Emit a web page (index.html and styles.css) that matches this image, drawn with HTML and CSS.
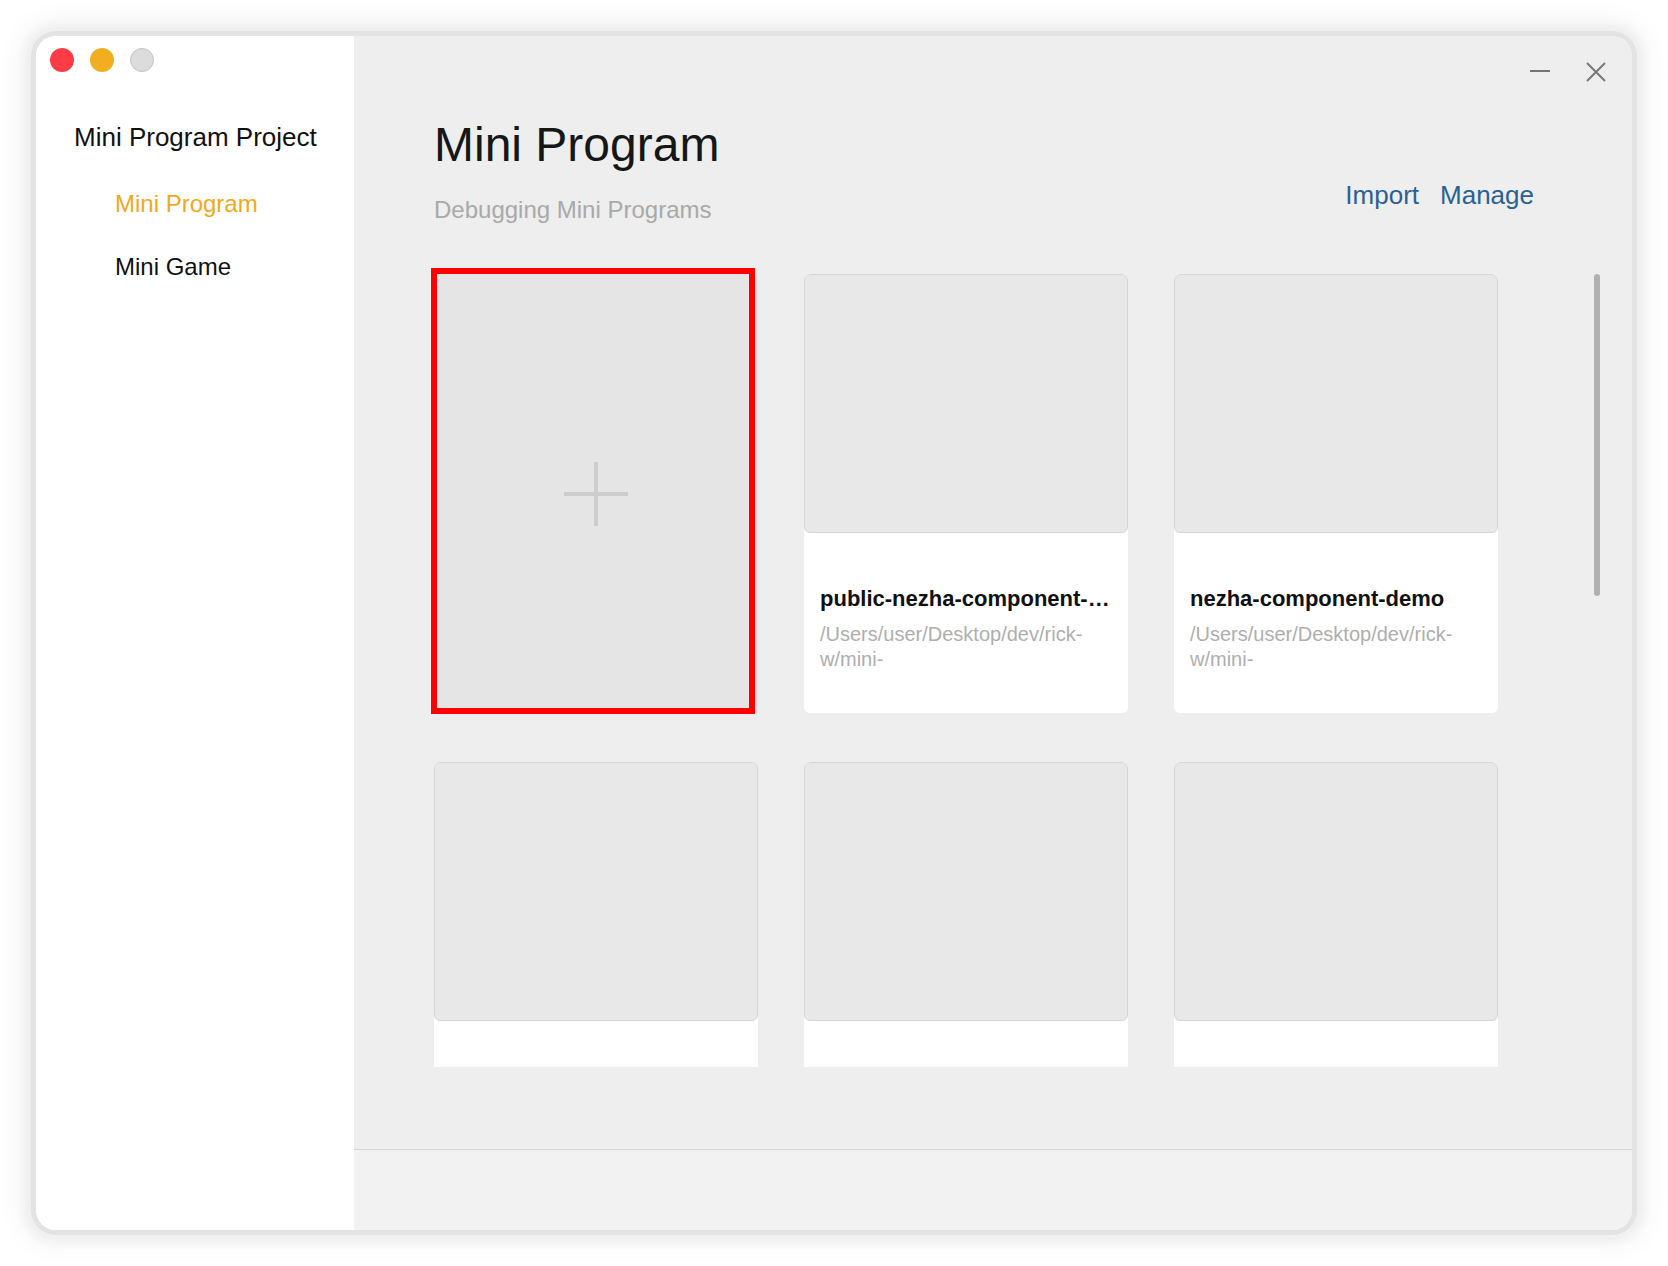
FILE: index.html
```html
<!DOCTYPE html>
<html>
<head>
<meta charset="utf-8">
<link rel="stylesheet" href="styles.css">
</head>
<body>
	<div class="window">
		<div class="side">
			<div class="lights">
				<span class="light red"></span>
				<span class="light yellow"></span>
				<span class="light gray"></span>
			</div>
			<div class="side-title">Mini Program Project</div>
			<div class="side-item active">Mini Program</div>
			<div class="side-item">Mini Game</div>
		</div>

		<div class="main">
			<div class="controls">
				<svg width="20" height="20" viewBox="0 0 20 20"><line x1="0" y1="9" x2="20" y2="9" stroke="#6f7575" stroke-width="2"/></svg>
				<svg width="20" height="20" viewBox="0 0 20 20"><path d="M1 1 L19 19 M19 1 L1 19" stroke="#777" stroke-width="2" fill="none"/></svg>
			</div>

			<div class="header">
				<div>
					<h1 class="title">Mini Program</h1>
					<div class="subtitle">Debugging Mini Programs</div>
				</div>
				<div class="links">
					<a>Import</a>
					<a>Manage</a>
				</div>
			</div>

			<div class="scroll">
				<div class="grid">
					<div class="card add">
						<div class="mark"></div>
						<svg width="64" height="64" viewBox="0 0 64 64"><path d="M32 0 V64 M0 32 H64" stroke="#cdcdcd" stroke-width="4"/></svg>
					</div>
					<div class="card">
						<div class="thumb"></div>
						<div class="info">
							<div class="name">public-nezha-component-demo</div>
							<div class="path">/Users/user/Desktop/dev/rick-w/mini-</div>
						</div>
					</div>
					<div class="card">
						<div class="thumb"></div>
						<div class="info">
							<div class="name">nezha-component-demo</div>
							<div class="path">/Users/user/Desktop/dev/rick-w/mini-</div>
						</div>
					</div>
					<div class="card">
						<div class="thumb"></div>
						<div class="info"></div>
					</div>
					<div class="card">
						<div class="thumb"></div>
						<div class="info"></div>
					</div>
					<div class="card">
						<div class="thumb"></div>
						<div class="info"></div>
					</div>
				</div>
				<div class="bar"></div>
			</div>

			<div class="spacer"></div>
			<div class="footer"></div>
		</div>
	</div>
</body>
</html>
```

FILE: styles.css
```css
* {
  box-sizing: border-box;
}

body {
  margin: 0;
  padding: 36px;
  background: #fff;
  font-family: "Liberation Sans", Arial, sans-serif;
  color: #111;
}

.window {
  width: 1596px;
  height: 1194px;
  border-radius: 20px;
  overflow: hidden;
  display: flex;
  box-shadow: 0 0 0 5px #e3e3e3, 0 0 8px 12px #efefef, 0 0 24px 20px #f8f8f8;
}

/* left column */
.side {
  width: 318px;
  background: #fff;
  padding: 12px 0 0 14px;
}

.lights {
  display: flex;
  gap: 16px;
  height: 24px;
}

.light {
  width: 24px;
  height: 24px;
  border-radius: 50%;
}
.red { background: #fd3c46; }
.yellow { background: #f1ae20; }
.gray { background: #dcdcdc; border: 1px solid #c0c0c0; }

.side-title {
  margin: 50px 0 0 24px;
  font-size: 26px;
  line-height: 30px;
}

.side-item {
  margin: 37px 0 0 65px;
  font-size: 24px;
  line-height: 30px;
}
.side-item + .side-item {
  margin-top: 33px;
}
.active {
  color: #f0a91c;
}

/* right column */
.main {
  flex: 1;
  position: relative;
  background: #edeeed;
  display: flex;
  flex-direction: column;
}

.controls {
  position: absolute;
  top: 26px;
  right: 26px;
  display: flex;
  gap: 36px;
}

.header {
  display: flex;
  justify-content: space-between;
  align-items: flex-end;
  padding: 81px 98px 0 80px;
}

.title {
  margin: 0;
  font-size: 48px;
  font-weight: normal;
  line-height: 56px;
  color: #161616;
}

.subtitle {
  margin-top: 22px;
  font-size: 24px;
  line-height: 30px;
  color: #a9a9a9;
}

.links {
  display: flex;
  gap: 21px;
  padding-bottom: 15px;
}
.links a {
  font-size: 26px;
  line-height: 30px;
  color: #2b6190;
}

.scroll {
  position: relative;
  height: 813px;
  margin-top: 29px;
  overflow: hidden;
}

.grid {
  display: grid;
  grid-template-columns: repeat(3, 324px);
  column-gap: 46px;
  row-gap: 49px;
  padding: 20px 0 0 80px;
}

.card {
  height: 439px;
  background: #fff;
  border-radius: 6px;
  overflow: hidden;
}

.card.add {
  position: relative;
  overflow: visible;
  background: #e5e5e5;
  display: flex;
  align-items: center;
  justify-content: center;
}

.mark {
  position: absolute;
  left: -3px;
  top: -6px;
  width: 324px;
  height: 446px;
  border: 6px solid #ff0000;
}

.thumb {
  height: 259px;
  background: #e8e8e8;
  border: 1px solid #d5d5d5;
  border-radius: 6px;
}

.info {
  padding: 52px 16px 0 16px;
}

.name {
  font-size: 22px;
  font-weight: bold;
  line-height: 28px;
  white-space: nowrap;
  overflow: hidden;
  text-overflow: ellipsis;
}

.path {
  margin-top: 9px;
  font-size: 20px;
  line-height: 25px;
  color: #aeaeae;
}

.bar {
  position: absolute;
  top: 20px;
  right: 32px;
  width: 6px;
  height: 322px;
  border-radius: 3px;
  background: #b0b0b0;
}

.spacer {
  flex: 1;
}

.footer {
  height: 81px;
  background: #f2f2f2;
  border-top: 1px solid #d6d6d6;
}
```
